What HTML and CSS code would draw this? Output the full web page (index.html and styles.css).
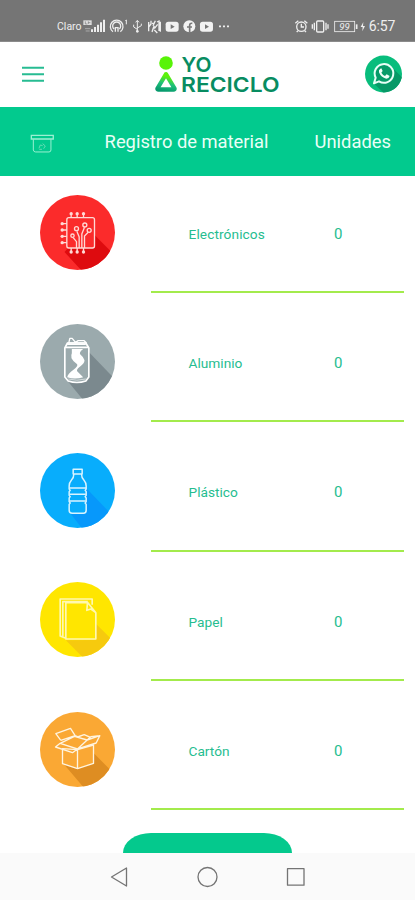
FILE: index.html
```html
<!DOCTYPE html>
<html lang="es">
<head>
<meta charset="utf-8">
<meta name="viewport" content="width=device-width">
<title>Yo Reciclo</title>
<link rel="stylesheet" href="styles.css">
</head>
<body>
<div class="status">
  <span class="carrier">Claro</span>
  <svg class="status-left" viewBox="245 50 450 55" fill="none" stroke="#eee" stroke-width="4">
    <path d="M249 60h25v14h-25z" fill="#ddd" stroke="none"/>
    <path d="M255 63v8h6M264 63v8M264 67h6" stroke="#777" stroke-width="2"/>
    <path d="M254 85h16M256 92h12" stroke="#aaa" stroke-width="3"/>
    <path d="M275 95v-8M284 95V80M293 95V73M302 95V66M311 95V58" stroke-width="6"/>
    <path d="M338 94a19 19 0 1 1 22 0M341 86a12 12 0 1 1 16 0M345 94v-12h8v12" />
    <path d="M375 61l3-2v13" stroke-width="3"/>
    <path d="M411 62v32M400 73v7l11 7M423 70v6l-12 7M406 66l5-6 5 6" stroke-width="3"/>
    <circle cx="411" cy="93" r="4" fill="#eee" stroke="none"/>
    <path d="M445 65v28M452 61v10l-7 9M455 69h8M465 61l-7 15M460 80l-5 15M470 65l6-3v30M480 64v30M462 85l10-13M455 94l7-18M471 98l-9-9" stroke-width="4"/>
    <rect x="496" y="64" width="39" height="30" rx="8" fill="#f2f2f2" stroke="none"/><path d="M511 72v14l12-7z" fill="#777" stroke="none"/>
    <circle cx="567" cy="78" r="18" fill="#f2f2f2" stroke="none"/><path d="M568 97V75q0-7 8-6M560 80h15" stroke="#777" stroke-width="5"/>
    <rect x="599" y="64" width="39" height="30" rx="8" fill="#f2f2f2" stroke="none"/><path d="M614 72v14l12-7z" fill="#777" stroke="none"/>
    <path d="M656 78h6M668 78h6M680 78h6" stroke-width="5"/>
  </svg>
  <svg class="status-right" viewBox="190 50 222 55" fill="none" stroke="#eee" stroke-width="4">
    <circle cx="215" cy="79" r="14"/><path d="M215 70v10h8M197 69l9-8M233 69l-9-8M205 91l-4 4M225 91l4 4"/>
    <rect x="261" y="62" width="21" height="33" rx="3"/><path d="M254 67v23M289 67v23M248 72v13M295 72v13"/>
    <rect x="315" y="63" width="60" height="31" stroke-width="2.5"/><path d="M381 72v14" stroke-width="5"/>
    <text x="329" y="90" class="battery">99</text>
    <path d="M401 65l-8 15h6l-1 13 8-16h-6z" fill="#eee" stroke="none"/>
  </svg>
  <time class="clock">6:57</time>
</div>
<header class="header">
  <svg class="menu" viewBox="0 0 22 16"><path d="M0 1.7h22M0 8.2h22M0 14.7h22" stroke="#27bc92" stroke-width="2"/></svg>
  <svg class="logo" viewBox="154 54 127 42">
    <defs><linearGradient id="tri" gradientUnits="userSpaceOnUse" x1="168" y1="73" x2="164" y2="91"><stop offset=".2" stop-color="#5df20b"/><stop offset=".6" stop-color="#1fc07a"/><stop offset="1" stop-color="#079a6d"/></linearGradient></defs>
    <circle cx="166" cy="63" r="6.8" fill="#58f307"/>
    <path d="M166 74.200l-8.600 14.300q0 1 1 1h15.200q1 0 1-1z" fill="none" stroke="url(#tri)" stroke-width="4.300" stroke-linejoin="round"/>
    <text x="181.500" y="72" textLength="30" lengthAdjust="spacingAndGlyphs">YO</text>
    <text x="181" y="91.700" textLength="98.500" lengthAdjust="spacingAndGlyphs">RECICLO</text>
  </svg>
  <svg class="chat" viewBox="404 166 111 114">
    <defs><clipPath id="cc"><circle cx="459.500" cy="223" r="55.500"/></clipPath></defs>
    <circle cx="459.500" cy="223" r="55.500" fill="#08bd7c"/>
    <path d="M481 199l60 60-50 50-61-58z" fill="#079967" clip-path="url(#cc)"/>
    <path d="M431 251l5-17a28 28 0 1 1 10 11z" fill="#079b69" stroke="#e9fff7" stroke-width="6" stroke-linejoin="round"/>
    <path d="M450 207q-6 3-4 11 6 16 22 19 8 0 10-8l-9-5-5 5q-7-3-11-10l4-5-4-8z" fill="#effff8"/>
  </svg>
</header>
<section class="heading">
  <svg class="bin" viewBox="88 84 74 58" fill="none" stroke="#9bf0d2" stroke-width="4"><path d="M92 88h66v11H92z"/><path d="M98 100v32q1 6 7 6h40q6 0 6-6v-32" stroke-width="3"/><path d="M115 127l4-10 7 2M126 113l8 7-5 8M116 130h8" stroke="#64ddb5" stroke-width="3"/></svg>
  <h1 class="title">Registro de material</h1>
  <h2 class="units">Unidades</h2>
</section>
<main class="list">
  <article class="row">
    <svg class="badge" viewBox="29.500 28 225 225" fill="none" stroke="#ffd9d5" stroke-width="4">
      <defs><clipPath id="c"><circle cx="142" cy="140.500" r="112.500"/></clipPath></defs>
      <circle cx="142" cy="140.500" r="112.500" fill="#fb2b2b" stroke="none"/>
      <path d="M193 148l90 90-80 70-100-109 10-11 80-1z" fill="#de0b0f" stroke="none" clip-path="url(#c)"/>
      <rect x="110" y="96" width="83" height="91" rx="6"/>
      <path d="M123 96V83M141 96V83M160 96V83M123 187v13M141 187v13M160 187v13M110 114H96M110 133H96M110 152H96M110 171H96"/>
      <g fill="#ffd9d5" stroke="none"><circle cx="123" cy="84" r="5"/><circle cx="141" cy="84" r="5"/><circle cx="160" cy="84" r="5"/><circle cx="123" cy="199" r="5"/><circle cx="141" cy="199" r="5"/><circle cx="160" cy="199" r="5"/><circle cx="96" cy="114" r="5"/><circle cx="96" cy="133" r="5"/><circle cx="96" cy="152" r="5"/><circle cx="96" cy="171" r="5"/></g>
      <path d="M139 187v-19l-10-12M147 187v-33l-7-17M155 187v-42l8-20M163 187v-36l11-11"/><circle cx="127" cy="150" r="5"/><circle cx="139" cy="129" r="6"/><circle cx="164" cy="118" r="6"/><circle cx="177" cy="134" r="6"/>
    </svg>
    <div class="entry"><span class="name wide">Electrónicos</span><span class="count">0</span></div>
  </article>
  <article class="row">
    <svg class="badge" viewBox="29.500 28 225 225" fill="none" stroke="#fff" stroke-width="5" stroke-linejoin="round">
      <circle cx="142" cy="140.500" r="112.500" fill="#9baaad" stroke="none"/>
      <path d="M176 112l110 115-85 80-91-111z" fill="#7b898e" stroke="none" clip-path="url(#c)"/>
      <path d="M112 85l-8 15v87l10 12q26 9 53 0l9-12v-87l-9-15z" fill="#9baaad"/>
      <path d="M112 85h55M105 98h71"/>
      <path d="M116 84l3-13h7l10 12 8-5h18l7 7M111 89h56" stroke-width="4"/>
      <path d="M125 103h34q-13 10-9 16 11 9 13 18 0 10-14 19-11 8-8 14l18 18q-25 7-48 0 3-12 18-22 15-10 12-17-13-9-17-18-2-10 1-15z" fill="#fff" stroke="none"/>
      <path d="M114 193q26 7 53 0" stroke="#d4dbdc" stroke-width="3"/>
    </svg>
    <div class="entry"><span class="name">Aluminio</span><span class="count">0</span></div>
  </article>
  <article class="row">
    <svg class="badge" viewBox="29.500 28 225 225" fill="none" stroke="#d9f4ff" stroke-width="4.500" stroke-linejoin="round">
      <circle cx="142" cy="140.500" r="112.500" fill="#08adfc" stroke="none"/>
      <path d="M167 132l110 115-80 60-79-101z" fill="#0798fb" stroke="none" clip-path="url(#c)"/>
      <path d="M129 77h27v14h-27zM131 91q0 11-7 18-7 8-7 18v9l3 4-3 4v11l3 4-3 4v11l3 4-3 4v18q0 9 9 9h34q8 0 8-9v-18l-3-4 3-4v-11l-3-4 3-4v-11l-3-4 3-4v-9q0-10-7-18-7-7-7-18z" fill="#08adfc"/>
      <path d="M117 133h51M118 152h49M118 172h49"/>
    </svg>
    <div class="entry"><span class="name">Plástico</span><span class="count">0</span></div>
  </article>
  <article class="row">
    <svg class="badge paper" viewBox="29.500 28 225 225" fill="none" stroke="#fff8b0" stroke-width="5">
      <circle cx="142" cy="140.500" r="112.500" fill="#ffe600" stroke="none"/>
      <path d="M195 151l90 90-80 60-98-98 88-1z" fill="#f6ca0e" stroke="none" clip-path="url(#c)"/>
      <path d="M107 197l-17-7V79h96v17M98 191V87h75M107 90h66l24 30v79h-90zM172 90l-2 23 12-4 15 11" stroke-linejoin="round"/>
    </svg>
    <div class="entry"><span class="name">Papel</span><span class="count">0</span></div>
  </article>
  <article class="row">
    <svg class="badge" viewBox="29.500 28 225 225" fill="none" stroke="#fff4df" stroke-width="4" stroke-linejoin="round">
      <circle cx="142" cy="140.500" r="112.500" fill="#faa834" stroke="none"/>
      <path d="M191 152l90 90-80 60-101-119 43 15z" fill="#de8d22" stroke="none" clip-path="url(#c)"/>
      <path d="M97 138v45l45 15 48-16v-55l-48 14z" fill="#faa834"/>
      <path d="M142 198v-57M76 133l14-11 52 17-15 11zM90 122l43-21 38 11-29 27M92 113L77 93l44-16 14 22M92 113l43-14 12 5M171 112l38-13-11 22-56 18M142 103l20-7 19 8M171 112l11-10 27-3"/>
    </svg>
    <div class="entry"><span class="name">Cartón</span><span class="count">0</span></div>
  </article>
</main>
<footer class="action"><div class="button"></div></footer>
<nav class="nav">
  <svg viewBox="0 0 200 24" fill="none" stroke="#747474" stroke-width="1.300" stroke-linejoin="round"><path d="M17.500 3v18L2.500 12z"/><circle cx="98.500" cy="12" r="9.500"/><rect x="178.500" y="3.700" width="16.500" height="16.500"/></svg>
</nav>
</body>
</html>
```
FILE: styles.css
```css
* { box-sizing: border-box; }
body { margin: 0; width: 415px; height: 900px; overflow: hidden; background: #fff; font-family: Roboto, sans-serif; display: flex; flex-direction: column; }
svg { display: block; flex: none; }
.status { height: 42px; flex: none; background: #757575; border-bottom: 1px solid #8b8b8b; display: flex; align-items: flex-start; padding: 17px 0 0 57px; color: #eee; }
.carrier { font-size: 10.500px; line-height: 19px; width: 24.700px; white-space: nowrap; }
.status-left { width: 150px; height: 18.330px; }
.status-right { width: 74px; height: 18.330px; margin-left: 61.600px; }
.battery { font-family: Roboto, sans-serif; font-size: 29px; font-style: italic; fill: #eee; stroke: none; }
.clock { font-size: 14px; line-height: 19px; margin-left: 1.500px; letter-spacing: -.1px; }
.header { height: 65px; flex: none; display: flex; align-items: flex-start; padding-left: 22px; }
.menu { width: 22px; height: 16px; margin-top: 24px; }
.logo { width: 127px; height: 42px; margin: 12px 0 0 110px; overflow: visible; }
.logo text { font-family: Inter, sans-serif; font-size: 20.500px; font-weight: 600; fill: #088c61; }
.chat { width: 37px; height: 38px; margin: 13px 0 0 83.500px; }
.heading { height: 69px; flex: none; background: #02ca8e; display: flex; align-items: center; padding-left: 29.500px; color: #e9fff7; }
.bin { width: 24.600px; height: 19.300px; margin-top: 4px; }
.title, .units { margin: 0; font-size: 18.350px; font-weight: 400; line-height: 24px; white-space: nowrap; }
.title { width: 209px; flex: none; margin-left: 50.500px; }
.units { margin-left: 1px; }
.list { display: flex; flex-direction: column; gap: 12px; flex: none; }
.row { height: 117.200px; display: flex; justify-content: space-between; padding: 0 11.500px 0 40px; }
.badge { width: 75px; height: 75px; margin-top: 19px; }
.paper { margin-left: -.500px; margin-top: 18.500px; }
.entry { width: 253px; border-bottom: 2.500px solid #a3eb4c; display: flex; padding: 48px 0 0 38px; color: #26bd90; line-height: 20px; }
.name { width: 145.500px; font-size: 13.700px; }
.wide { letter-spacing: .1px; }
.count { font-size: 15px; }
.action { flex: 1; display: flex; align-items: flex-end; justify-content: center; }
.button { width: 169px; height: 20px; background: #04c98d; border-radius: 28px 28px 0 0 / 20px 20px 0 0; }
.nav { height: 47px; flex: none; background: #fafafa; padding: 12px 0 0 109px; }
.nav svg { width: 200px; height: 24px; }
```
